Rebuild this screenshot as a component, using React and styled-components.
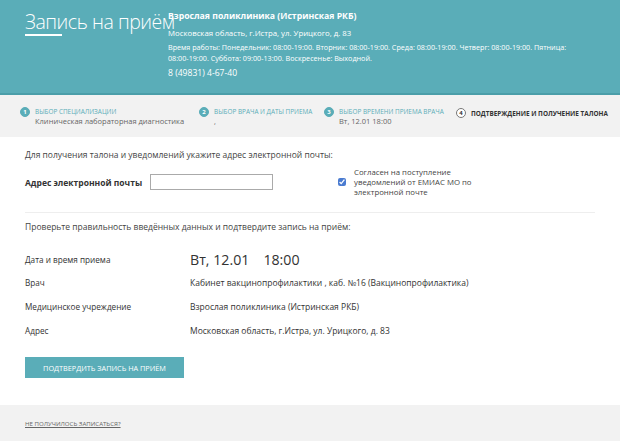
import React from "react"
import styled, { createGlobalStyle } from "styled-components"

const GlobalStyle = createGlobalStyle`
  html, body {
    margin: 0;
    padding: 0;
    background: #fff;
    font-family: "Open Sans", "Liberation Sans", sans-serif;
    color: #333;
  }
`

const Page = styled.div`
  width: 620px;
  height: 441px;
  display: flex;
  flex-direction: column;
  overflow: hidden;
`

const Header = styled.header`
  background: #5aadb8;
  border-bottom: 2px solid #4b9ea9;
  height: 95px;
  box-sizing: border-box;
  display: flex;
  padding: 10px 0 0 25px;
  color: #fff;
`

const TitleBox = styled.div`
  width: 143px;
  flex: none;
`

const Title = styled.h1`
  margin: 0;
  font-size: 19.5px;
  font-weight: 300;
  line-height: 24px;
  letter-spacing: -0.45px;
  white-space: nowrap;
  &::after {
    content: "";
    display: block;
    width: 37px;
    height: 2px;
    background: #fff;
  }
`

const Info = styled.div`
  font-size: 7.2px;
  line-height: 11px;
  white-space: nowrap;
`

const ClinicName = styled.div`
  font-weight: 700;
  font-size: 8.7px;
  line-height: 12px;
  margin-bottom: 6px;
`

const Address = styled.div`
  font-size: 7.8px;
  margin-bottom: 3px;
`

const Hours = styled.div`
  margin-bottom: 2px;
`

const Phone = styled.div`
  font-size: 8.6px;
  margin-top: 4px;
`

const Steps = styled.nav`
  background: #f2f2f2;
  height: 42px;
  box-sizing: border-box;
  display: flex;
  align-items: flex-start;
  padding: 12px 0 0 20px;
`

const Step = styled.div`
  display: flex;
  width: ${(p) => p.$w}px;
  align-items: ${(p) => (p.$current ? "center" : "flex-start")};
`

const Circle = styled.span`
  width: 10px;
  height: 10px;
  border-radius: 50%;
  flex: none;
  box-sizing: border-box;
  margin-right: 5px;
  margin-top: ${(p) => (p.$current ? "1px" : "0")};
  background: ${(p) => (p.$current ? "#fff" : "#5aadb8")};
  border: 1px solid ${(p) => (p.$current ? "#777" : "#5aadb8")};
  color: ${(p) => (p.$current ? "#333" : "#fff")};
  font-size: 6px;
  font-weight: 700;
  line-height: 8px;
  text-align: center;
`

const StepText = styled.div`
  display: flex;
  flex-direction: column;
`

const StepLabel = styled.span`
  font-size: 6.4px;
  line-height: 9px;
  text-transform: uppercase;
  color: ${(p) => (p.$current ? "#333" : "#5aadb8")};
  font-weight: ${(p) => (p.$current ? 700 : 400)};
  margin-top: ${(p) => (p.$current ? "2px" : "0")};
`

const StepValue = styled.span`
  font-size: 7.5px;
  line-height: 10px;
  color: #666;
`

const Main = styled.main`
  flex: 1;
  padding: 12px 25px 0 25px;
`

const Text = styled.p`
  margin: 0;
  font-size: 8.5px;
  line-height: 12px;
  color: #444;
`

const EmailRow = styled.div`
  display: flex;
  align-items: center;
  margin-top: 6px;
  padding-bottom: 15px;
  border-bottom: 1px solid #eeeeee;
`

const FieldLabel = styled.label`
  width: 125px;
  font-size: 8.5px;
  font-weight: 700;
  color: #333;
`

const Input = styled.input`
  width: 123px;
  height: 16px;
  box-sizing: border-box;
  border: 1px solid #aaa;
  margin: 0;
  padding: 0 4px;
  font: inherit;
`

const Consent = styled.label`
  display: flex;
  align-items: center;
  margin-left: 65px;
  width: 140px;
`

const Check = styled.input`
  width: 8px;
  height: 8px;
  margin: 0 8px 0 0;
  accent-color: #4a7bd0;
  flex: none;
`

const ConsentText = styled.span`
  font-size: 7.8px;
  line-height: 10px;
  color: #444;
`

const CheckTitle = styled(Text)`
  margin-top: 8px;
`

const Details = styled.dl`
  display: grid;
  grid-template-columns: 165px 1fr;
  align-items: center;
  margin: 18px 0 0 0;
`

const Term = styled.dt`
  font-size: 8.2px;
  color: #333;
  line-height: 12px;
  height: ${(p) => (p.$big ? "18px" : "12px")};
  display: flex;
  align-items: center;
  margin-bottom: ${(p) => (p.$big ? "8px" : "12px")};
`

const Value = styled.dd`
  margin: 0 0 ${(p) => (p.$big ? "8px" : "12px")} 0;
  height: ${(p) => (p.$big ? "18px" : "12px")};
  font-size: ${(p) => (p.$big ? "14.2px" : "8.5px")};
  line-height: ${(p) => (p.$big ? "18px" : "12px")};
  color: #333;
  white-space: nowrap;
`

const Time = styled.span`
  margin-left: 14px;
`

const Button = styled.button`
  margin-top: 8px;
  width: 159px;
  height: 21px;
  background: #5aadb8;
  border: 0;
  color: #fff;
  font-family: inherit;
  font-size: 7.3px;
  text-transform: uppercase;
  padding: 0;
  cursor: pointer;
`

const Footer = styled.footer`
  background: #f2f2f2;
  height: 36px;
  padding-left: 25px;
  display: flex;
  align-items: center;
`

const FooterLink = styled.a`
  font-size: 6.1px;
  color: #666;
  text-transform: uppercase;
  text-decoration: underline;
  margin-top: 1px;
`

const steps = [
  { n: 1, label: "Выбор специализации", value: "Клиническая лабораторная диагностика", w: 179 },
  { n: 2, label: "Выбор врача и даты приема", value: ",", w: 125 },
  { n: 3, label: "Выбор времени приема врача", value: "Вт, 12.01 18:00", w: 132 },
  { n: 4, label: "Подтверждение и получение талона", current: true, w: 160 },
]

const details = [
  { term: "Врач", value: "Кабинет вакцинопрофилактики , каб. №16 (Вакцинопрофилактика)" },
  { term: "Медицинское учреждение", value: "Взрослая поликлиника (Истринская РКБ)" },
  { term: "Адрес", value: "Московская область, г.Истра, ул. Урицкого, д. 83" },
]

export default function App() {
  return (
    <Page>
      <GlobalStyle />
      <Header>
        <TitleBox>
          <Title>Запись на приём</Title>
        </TitleBox>
        <Info>
          <ClinicName>Взрослая поликлиника (Истринская РКБ)</ClinicName>
          <Address>Московская область, г.Истра, ул. Урицкого, д. 83</Address>
          <Hours>
            Время работы: Понедельник: 08:00-19:00. Вторник: 08:00-19:00. Среда: 08:00-19:00. Четверг: 08:00-19:00. Пятница:
            <br />
            08:00-19:00. Суббота: 09:00-13:00. Воскресенье: Выходной.
          </Hours>
          <Phone>8 (49831) 4-67-40</Phone>
        </Info>
      </Header>

      <Steps>
        {steps.map((s) => (
          <Step key={s.n} $w={s.w} $current={s.current}>
            <Circle $current={s.current}>{s.n}</Circle>
            <StepText>
              <StepLabel $current={s.current}>{s.label}</StepLabel>
              {s.value && <StepValue>{s.value}</StepValue>}
            </StepText>
          </Step>
        ))}
      </Steps>

      <Main>
        <Text>Для получения талона и уведомлений укажите адрес электронной почты:</Text>
        <EmailRow>
          <FieldLabel>Адрес электронной почты</FieldLabel>
          <Input type="text" />
          <Consent>
            <Check type="checkbox" defaultChecked />
            <ConsentText>Согласен на поступление уведомлений от ЕМИАС МО по электронной почте</ConsentText>
          </Consent>
        </EmailRow>
        <CheckTitle>Проверьте правильность введённых данных и подтвердите запись на приём:</CheckTitle>
        <Details>
          <Term $big>Дата и время приема</Term>
          <Value $big>
            Вт, 12.01<Time>18:00</Time>
          </Value>
          {details.map((d) => (
            <React.Fragment key={d.term}>
              <Term>{d.term}</Term>
              <Value>{d.value}</Value>
            </React.Fragment>
          ))}
        </Details>
        <Button>Подтвердить запись на приём</Button>
      </Main>

      <Footer>
        <FooterLink href="#">Не получилось записаться?</FooterLink>
      </Footer>
    </Page>
  )
}
